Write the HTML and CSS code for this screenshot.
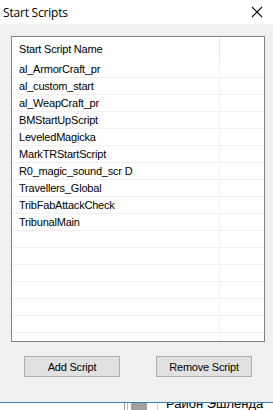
FILE: index.html
```html
<!DOCTYPE html>
<html lang="en">
<head>
    <meta charset="UTF-8">
    <title>Start Scripts</title>
    <link rel="stylesheet" href="styles.css">
</head>
<body>
    <div class="window">
        <div class="titlebar">
            <span class="title">Start Scripts</span>
            <svg class="close" width="12" height="12" viewBox="0 0 12 12">
                <path d="M1 1 L11 11 M11 1 L1 11" stroke="#111" stroke-width="1.1" fill="none"/>
            </svg>
        </div>
        <div class="body">
            <div class="list">
                <div class="row head">
                    <div class="cell name">Start Script Name</div>
                    <div class="cell extra"></div>
                </div>
                <div class="row"><div class="cell name">al_ArmorCraft_pr</div><div class="cell extra"></div></div>
                <div class="row"><div class="cell name">al_custom_start</div><div class="cell extra"></div></div>
                <div class="row"><div class="cell name">al_WeapCraft_pr</div><div class="cell extra"></div></div>
                <div class="row"><div class="cell name">BMStartUpScript</div><div class="cell extra"></div></div>
                <div class="row"><div class="cell name">LeveledMagicka</div><div class="cell extra"></div></div>
                <div class="row"><div class="cell name">MarkTRStartScript</div><div class="cell extra"></div></div>
                <div class="row"><div class="cell name">R0_magic_sound_scr D</div><div class="cell extra"></div></div>
                <div class="row"><div class="cell name">Travellers_Global</div><div class="cell extra"></div></div>
                <div class="row"><div class="cell name">TribFabAttackCheck</div><div class="cell extra"></div></div>
                <div class="row"><div class="cell name">TribunalMain</div><div class="cell extra"></div></div>
                <div class="row"><div class="cell name"></div><div class="cell extra"></div></div>
                <div class="row"><div class="cell name"></div><div class="cell extra"></div></div>
                <div class="row"><div class="cell name"></div><div class="cell extra"></div></div>
                <div class="row"><div class="cell name"></div><div class="cell extra"></div></div>
                <div class="row"><div class="cell name"></div><div class="cell extra"></div></div>
                <div class="row"><div class="cell name"></div><div class="cell extra"></div></div>
                <div class="row"><div class="cell name"></div><div class="cell extra"></div></div>
            </div>
            <div class="buttons">
                <button>Add Script</button>
                <button>Remove Script</button>
            </div>
        </div>
        <div class="behind">
            <div class="strip">
                <span class="grip"></span>
                <span class="thumb"></span>
                <span class="sep"></span>
                <span class="region">Район Эшленда</span>
            </div>
        </div>
    </div>
</body>
</html>
```

FILE: styles.css
```css
html, body
{
    margin: 0;
    padding: 0;
}
body
{
    width: 273px;
    height: 410px;
    overflow: hidden;
    background-color: #f0f0f0;
    font-family: 'Liberation Sans', Arial, sans-serif;
    font-size: 11px;
    color: #000;
}
.window
{
    display: flex;
    flex-direction: column;
    height: 410px;
}
.titlebar
{
    height: 24px;
    background-color: #fff;
    display: flex;
    align-items: center;
    justify-content: space-between;
    padding: 0 10px 0 3px;
}
.title
{
    font-family: 'Open Sans', 'Noto Sans', sans-serif;
    font-size: 12px;
    letter-spacing: -0.2px;
}
.body
{
    flex: 1;
    padding: 12px 8px 0 11px;
}
.list
{
    height: 304px;
    border: 1px solid #828282;
    background-color: #fff;
    overflow: hidden;
    letter-spacing: -0.2px;
}
.row
{
    display: flex;
    height: 16px;
    border-bottom: 1px solid #f0f0f0;
}
.row.head
{
    height: 24px;
    border-bottom: none;
}
.cell
{
    display: flex;
    align-items: center;
    white-space: nowrap;
    overflow: hidden;
}
.name
{
    width: 200px;
    padding-left: 7px;
    border-right: 1px solid #f0f0f0;
}
.head .name
{
    height: 22px;
    margin-top: 1px;
    border-right-color: #e5e5e5;
}
.extra
{
    flex: 1;
}
.buttons
{
    display: flex;
    justify-content: space-between;
    padding: 14px 13px 0 13px;
}
button
{
    width: 96px;
    height: 21px;
    padding: 0;
    background-color: #e1e1e1;
    border: 1px solid #adadad;
    font-family: 'Liberation Sans', Arial, sans-serif;
    font-size: 11px;
    letter-spacing: -0.2px;
    color: #000;
}
.behind
{
    height: 7px;
    border-top: 1px solid #3c7fb9;
    background-color: #fff;
    overflow: hidden;
}
.strip
{
    display: flex;
    align-items: flex-end;
    height: 7px;
    padding-left: 124px;
}
.grip
{
    width: 2px;
    height: 7px;
    border-left: 1px solid #999;
    border-right: 1px solid #bbb;
}
.thumb
{
    width: 16px;
    height: 7px;
    margin-left: 3px;
    background-color: #a0a0a0;
}
.sep
{
    width: 1px;
    height: 7px;
    margin-left: 10px;
    background-color: #ccc;
}
.region
{
    margin-left: 8px;
    font-size: 13px;
    line-height: 7px;
    height: 7px;
    position: relative;
    top: -3px;
}
```
